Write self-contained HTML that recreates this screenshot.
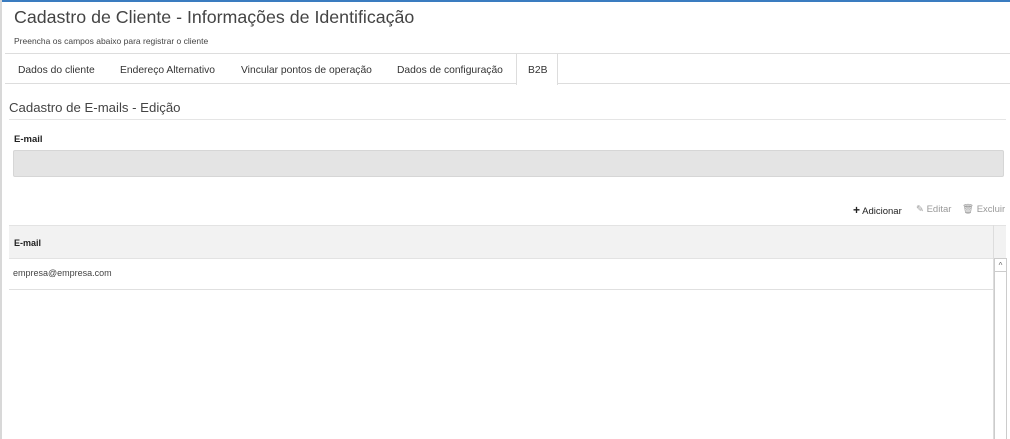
<!DOCTYPE html>
<html><head><meta charset="utf-8"><style>
body{margin:0;width:1010px;height:439px;overflow:hidden;background:#fff;font-family:"Liberation Sans",sans-serif;color:#333;position:relative}
.a{position:absolute}
.t{top:65px;font-size:10.3px;color:#333}
</style></head><body>
<div class="a" style="left:0;top:0;width:1010px;height:2px;background:#3a7cc0"></div>
<div class="a" style="left:0;top:0;width:2px;height:439px;background:#d8d8d8"></div>
<div class="a" style="left:14px;top:7px;font-size:17.8px;color:#444">Cadastro de Cliente - Informações de Identificação</div>
<div class="a" style="left:14px;top:36px;font-size:8.5px;color:#444">Preencha os campos abaixo para registrar o cliente</div>
<div class="a" style="left:5px;top:53px;width:1005px;height:1px;background:#ddd"></div>
<div class="a" style="left:5px;top:83px;width:1005px;height:1px;background:#ddd"></div>
<div class="a" style="left:516px;top:53px;width:40px;height:31px;border:1px solid #ddd;border-bottom:none;background:#fff"></div>
<div class="a t" style="left:18px">Dados do cliente</div>
<div class="a t" style="left:120px">Endereço Alternativo</div>
<div class="a t" style="left:241px">Vincular pontos de operação</div>
<div class="a t" style="left:397px">Dados de configuração</div>
<div class="a t" style="left:528px">B2B</div>
<div class="a" style="left:9px;top:100px;font-size:13.2px;color:#444">Cadastro de E-mails - Edição</div>
<div class="a" style="left:9px;top:119px;width:997px;height:1px;background:#e5e5e5"></div>
<div class="a" style="left:14px;top:134px;font-size:9.5px;font-weight:bold;color:#222">E-mail</div>
<div class="a" style="left:13px;top:150px;width:989px;height:25px;background:#e4e4e4;border:1px solid #d6d6d6;border-radius:2px"></div>
<div class="a" style="left:853px;top:203px;font-size:9.5px;color:#222"><b style="font-size:12px">+</b> Adicionar</div>
<div class="a" style="left:916px;top:204px;font-size:9.5px;color:#999">✎ Editar</div>
<div class="a" style="left:962px;top:204px;font-size:9.5px;color:#999">🗑 Excluir</div>
<div class="a" style="left:9px;top:225px;width:997px;height:32px;background:#f2f2f2;border-top:1px solid #e3e3e3;border-bottom:1px solid #e3e3e3"></div>
<div class="a" style="left:993px;top:225px;width:1px;height:214px;background:#ddd"></div>
<div class="a" style="left:14px;top:238px;font-size:9px;font-weight:bold;color:#222">E-mail</div>
<div class="a" style="left:13px;top:268px;font-size:9px;color:#444">empresa@empresa.com</div>
<div class="a" style="left:9px;top:289px;width:984px;height:1px;background:#e0e0e0"></div>
<div class="a" style="left:994px;top:258px;width:11px;height:181px;border-left:1px solid #ccc;border-right:1px solid #ccc;background:#fff"></div>
<div class="a" style="left:994px;top:258px;width:11px;height:12px;border:1px solid #ccc;font-size:8px;text-align:center;line-height:14px;color:#666">^</div>
</body></html>
